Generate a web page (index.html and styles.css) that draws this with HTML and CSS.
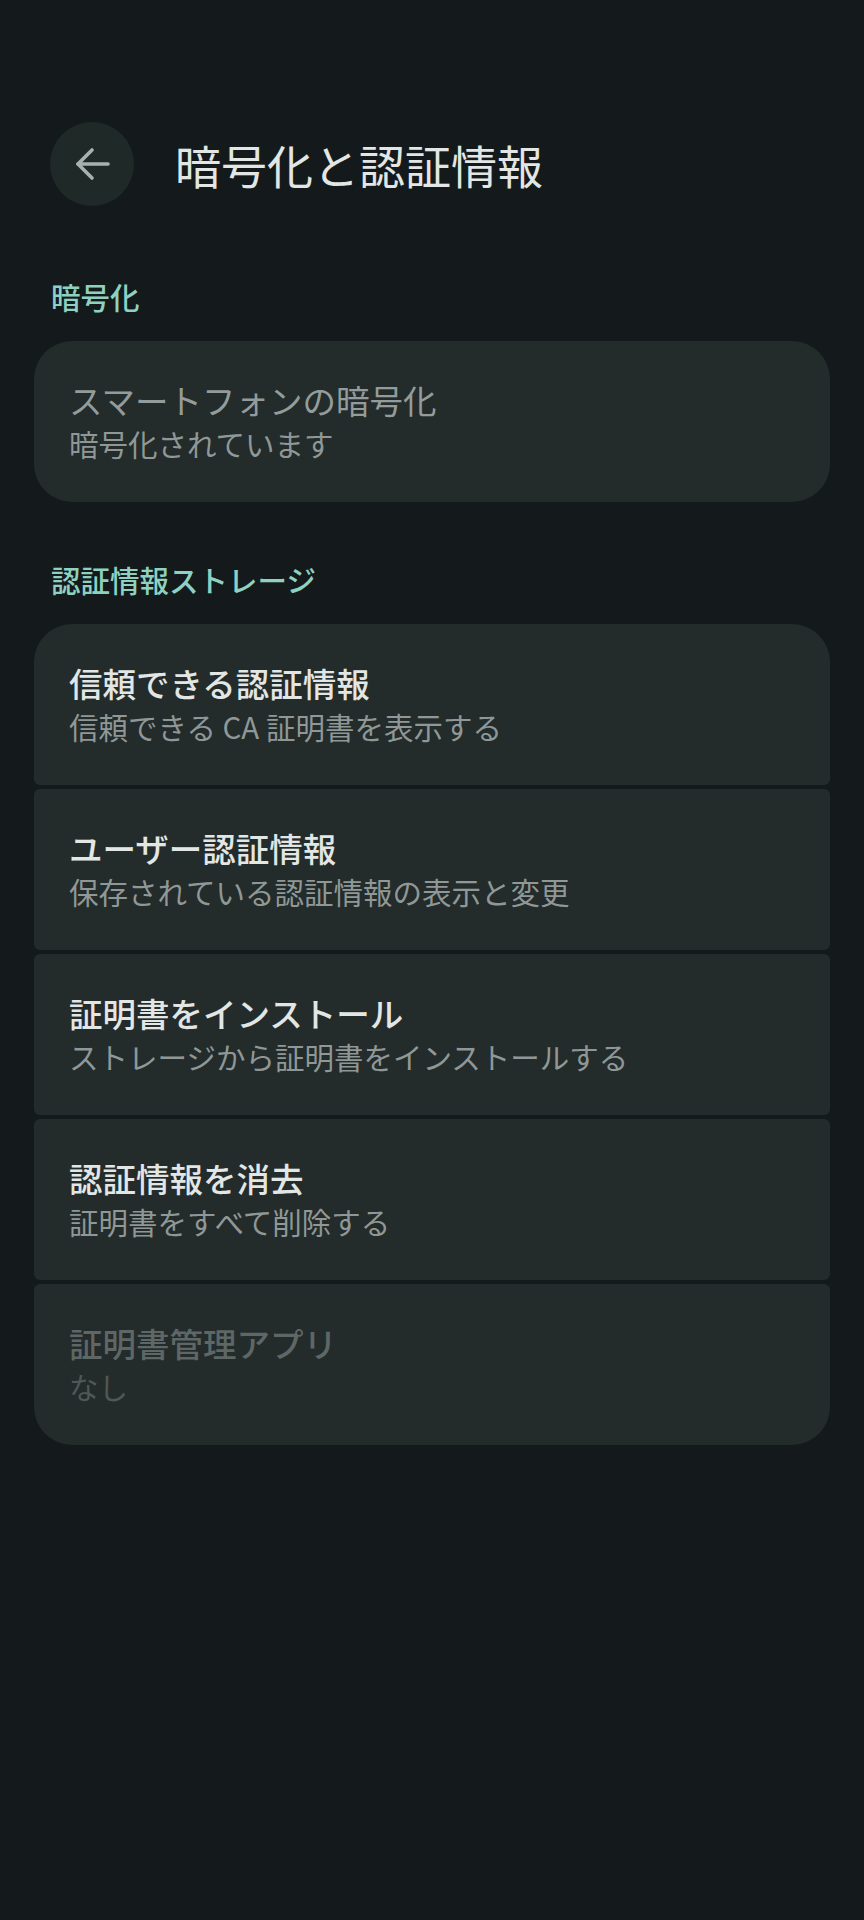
FILE: index.html
```html
<!DOCTYPE html>
<html lang="ja">
<head>
  <meta charset="UTF-8">
  <meta name="viewport" content="width=device-width, initial-scale=1.0">
  <title>暗号化と認証情報</title>
  <link rel="stylesheet" href="styles.css">
</head>
<body>
  <header class="top-bar">
    <button class="back" aria-label="戻る">
      <svg width="44" height="44" viewBox="0 0 44 44" fill="none" stroke="currentColor" stroke-width="3.6" stroke-linecap="round" stroke-linejoin="round">
        <line x1="8" y1="22" x2="38" y2="22"/>
        <polyline points="22,8 8,22 22,36"/>
      </svg>
    </button>
    <h1>暗号化と認証情報</h1>
  </header>

  <section class="group">
    <h2>暗号化</h2>
    <div class="cards">
      <div class="card muted">
        <div class="title">スマートフォンの暗号化</div>
        <div class="summary">暗号化されています</div>
      </div>
    </div>
  </section>

  <section class="group">
    <h2>認証情報ストレージ</h2>
    <div class="cards">
      <div class="card">
        <div class="title">信頼できる認証情報</div>
        <div class="summary">信頼できる CA 証明書を表示する</div>
      </div>
      <div class="card">
        <div class="title">ユーザー認証情報</div>
        <div class="summary">保存されている認証情報の表示と変更</div>
      </div>
      <div class="card">
        <div class="title">証明書をインストール</div>
        <div class="summary">ストレージから証明書をインストールする</div>
      </div>
      <div class="card">
        <div class="title">認証情報を消去</div>
        <div class="summary">証明書をすべて削除する</div>
      </div>
      <div class="card disabled">
        <div class="title">証明書管理アプリ</div>
        <div class="summary">なし</div>
      </div>
    </div>
  </section>
</body>
</html>
```

FILE: styles.css
```css
body {
  margin: 0;
  min-height: 1920px;
  background: #141a1b;
  color: #e2e6e4;
  font-family: "Noto Sans CJK JP", "Noto Sans", sans-serif;
}

.top-bar {
  display: flex;
  align-items: center;
  gap: 41px;
  padding: 122px 0 0 50px;
}

.back {
  width: 84px;
  height: 84px;
  border: none;
  border-radius: 50%;
  background: #1f2928;
  color: #a7b2af;
  display: flex;
  align-items: center;
  justify-content: center;
  padding: 0;
}

.top-bar h1 {
  margin: 0;
  font-size: 46px;
  font-weight: 400;
  line-height: 60px;
}

.group {
  padding: 0 34px;
}

.group h2 {
  margin: 0;
  padding-left: 17px;
  font-size: 29.5px;
  font-weight: 500;
  line-height: 40px;
  color: #8fd1c1;
}

.group:nth-of-type(1) h2 {
  margin-top: 70px;
}

.group:nth-of-type(2) h2 {
  margin-top: 57px;
}

.cards {
  margin-top: 25px;
  display: flex;
  flex-direction: column;
  gap: 4px;
}

.card {
  background: #232b2b;
  border-radius: 6px;
  padding: 36px 35px 39px;
  height: 86px;
}

.card:first-child {
  border-top-left-radius: 38px;
  border-top-right-radius: 38px;
}

.card:last-child {
  border-bottom-left-radius: 38px;
  border-bottom-right-radius: 38px;
}

.title {
  font-size: 33.5px;
  font-weight: 500;
  line-height: 46px;
  color: #e2e6e4;
}

.summary {
  font-size: 29.5px;
  line-height: 40px;
  color: #8f9896;
}

.muted .title {
  color: #939c9a;
  font-weight: 400;
}

.disabled .title {
  color: #5e6765;
}

.disabled .summary {
  color: #4f5856;
}
```
